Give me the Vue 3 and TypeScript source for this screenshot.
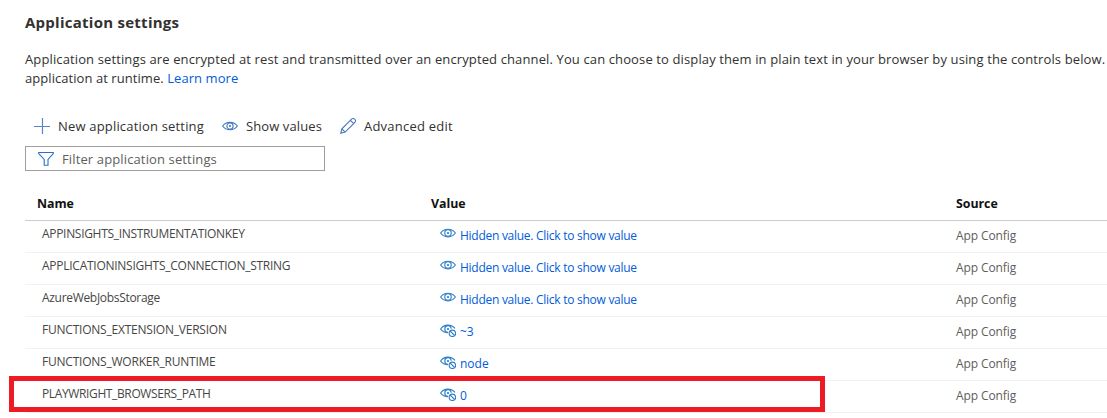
<script setup lang="ts">
interface Setting {
  name: string
  value: string
  hidden: boolean
  fit: string
}

const hiddenText = 'Hidden value. Click to show value'

const settings: Setting[] = [
  { name: 'APPINSIGHTS_INSTRUMENTATIONKEY', value: hiddenText, hidden: true, fit: 'snug' },
  { name: 'APPLICATIONINSIGHTS_CONNECTION_STRING', value: hiddenText, hidden: true, fit: 'regular' },
  { name: 'AzureWebJobsStorage', value: hiddenText, hidden: true, fit: 'snug' },
  { name: 'FUNCTIONS_EXTENSION_VERSION', value: '~3', hidden: false, fit: 'wide' },
  { name: 'FUNCTIONS_WORKER_RUNTIME', value: 'node', hidden: false, fit: 'wide' },
  { name: 'PLAYWRIGHT_BROWSERS_PATH', value: '0', hidden: false, fit: 'tight' },
]
</script>

<template>
  <main class="page">
    <h1 class="title">Application settings</h1>
    <p class="description">
      Application settings are encrypted at rest and transmitted over an encrypted channel. You can choose to display them in plain text in your browser by using the controls below.<br />
      <span class="second">application at runtime. <a class="link">Learn more</a></span>
    </p>

    <div class="toolbar">
      <button class="command add">
        <svg class="icon" viewBox="0 0 16 16"><path d="M8.5 0v16M0 8.5h16" fill="none" stroke="#5b83c8" stroke-width="1.2" /></svg>
        <span>New application setting</span>
      </button>
      <button class="command show">
        <svg class="icon" viewBox="0 0 16 16">
          <g fill="none" stroke="#3f76bf" stroke-width="1.1"><path d="M.6 8C4.3 3 11.7 3 15.4 8 11.7 13 4.3 13 .6 8Z" /><circle cx="8" cy="8" r="3.1" /></g>
          <circle cx="8" cy="8" r="1" fill="#2f6fc0" />
        </svg>
        <span>Show values</span>
      </button>
      <button class="command edit">
        <svg class="icon" viewBox="0 0 16 16"><path d="M.7 15.3 1.9 10.8 11.8.9Q13.4-.1 14.8 1.2T15.1 4.2L5.2 14.1ZM1.9 10.8l3.3 3.3M10.4 2.3l3.3 3.3" fill="none" stroke="#4675bd" stroke-width="1.1" /></svg>
        <span>Advanced edit</span>
      </button>
    </div>

    <label class="filter">
      <svg class="icon" viewBox="0 0 16 16"><path d="M.7 1.5h14.6v1L10 8.5v5.8H6.2V8.5L.7 2.5Z" fill="none" stroke="#2672cb" stroke-width="1.1" /></svg>
      <span>Filter application settings</span>
    </label>

    <section class="table">
      <div class="row head">
        <span class="c-name">Name</span>
        <span class="c-value">Value</span>
        <span class="c-source">Source</span>
      </div>
      <div v-for="s in settings" :key="s.name" class="row">
        <span class="c-name" :class="s.fit">{{ s.name }}</span>
        <a class="c-value">
          <svg v-if="s.hidden" class="eye" viewBox="0 0 16 16">
            <g fill="none" stroke="#2c7fc9" stroke-width="1.1"><path d="M.6 8C4.3 2.9 11.7 2.9 15.4 8 11.7 13.1 4.3 13.1.6 8Z" /><circle cx="8" cy="8" r="3.2" /></g>
            <circle cx="8" cy="8" r="1" fill="#1473c5" />
          </svg>
          <svg v-else class="eye" viewBox="0 0 16 16">
            <g fill="none" stroke="#2c7fc9" stroke-width="1.1"><path d="M8 11.8C5 11.7 2.5 10.5.6 8 4.3 2.9 11.3 2.9 15 7.4M8.1 11.2a3.2 3.2 0 1 1 3.1-3.5" /><circle cx="12.4" cy="12.3" r="3.2" /><path d="m10.2 10.1 4.4 4.4" /></g>
            <circle cx="8" cy="8" r="1" fill="#1473c5" />
          </svg>
          <span :class="{ prompt: s.hidden }">{{ s.value }}</span>
        </a>
        <span class="c-source">App Config</span>
      </div>
      <div class="highlight"></div>
    </section>
  </main>
</template>

<style>
html,
body {
  margin: 0;
  background: #fff;
  overflow: hidden;
}
</style>

<style scoped>
.page {
  box-sizing: border-box;
  width: 1107px;
  height: 418px;
  padding: 12px 0 0 25px;
  overflow: hidden;
  font-family: "Open Sans", "Noto Sans", sans-serif;
  font-size: 13px;
  color: #323130;
  white-space: nowrap;
}
.title {
  margin: 0;
  height: 20px;
  line-height: 20px;
  font-size: 15px;
  font-weight: 700;
  letter-spacing: 0.26px;
}
.description {
  margin: 18px 0 0;
  height: 38px;
  line-height: 19px;
  letter-spacing: 0.123px;
}
.second {
  letter-spacing: 0.06px;
}
.link {
  color: #015cda;
}
.toolbar {
  display: flex;
  height: 20px;
  margin-top: 28px;
  padding-left: 9px;
}
.command {
  display: flex;
  align-items: center;
  gap: 8px;
  padding: 0;
  border: 0;
  background: none;
  font: inherit;
  color: inherit;
}
.add {
  width: 188px;
  letter-spacing: 0.18px;
}
.show {
  width: 118px;
  letter-spacing: 0.1px;
}
.edit {
  letter-spacing: 0.22px;
}
.icon {
  width: 16px;
  height: 16px;
  flex: none;
  overflow: visible;
}
.filter {
  box-sizing: border-box;
  display: flex;
  align-items: center;
  gap: 8px;
  width: 300px;
  height: 25px;
  margin-top: 10px;
  padding-left: 12px;
  border: 1px solid #a19f9d;
  color: #605e5c;
  letter-spacing: 0.13px;
}
.table {
  position: relative;
  margin-top: 17px;
}
.row {
  box-sizing: border-box;
  display: grid;
  grid-template-columns: 415px 516px 1fr;
  height: 32px;
  border-bottom: 1px solid #f3f2f1;
  line-height: 20px;
  font-size: 12px;
}
.c-name {
  padding: 3px 0 0 17px;
  color: #484644;
}
.snug {
  letter-spacing: -0.31px;
}
.regular {
  letter-spacing: -0.26px;
}
.wide {
  letter-spacing: -0.22px;
}
.tight {
  letter-spacing: -0.37px;
}
.c-value {
  display: flex;
  gap: 4px;
  padding-top: 5px;
  color: #015cda;
}
.prompt {
  letter-spacing: -0.27px;
}
.c-source {
  padding-top: 5px;
  color: #605e5c;
  letter-spacing: -0.1px;
}
.eye {
  width: 16px;
  height: 16px;
  flex: none;
  margin-top: -1px;
}
.head {
  height: 33px;
  grid-template-columns: 406px 525px 1fr;
  border-color: #c8ccd3;
  font-size: 12.4px;
  font-weight: 700;
}
.head span {
  padding-top: 6px;
  color: #111;
  letter-spacing: -0.05px;
}
.head .c-name {
  padding-left: 12px;
}
.highlight {
  box-sizing: border-box;
  position: absolute;
  left: -16px;
  top: 188px;
  width: 816px;
  height: 36px;
  border: 5px solid #ed1c24;
}
</style>
